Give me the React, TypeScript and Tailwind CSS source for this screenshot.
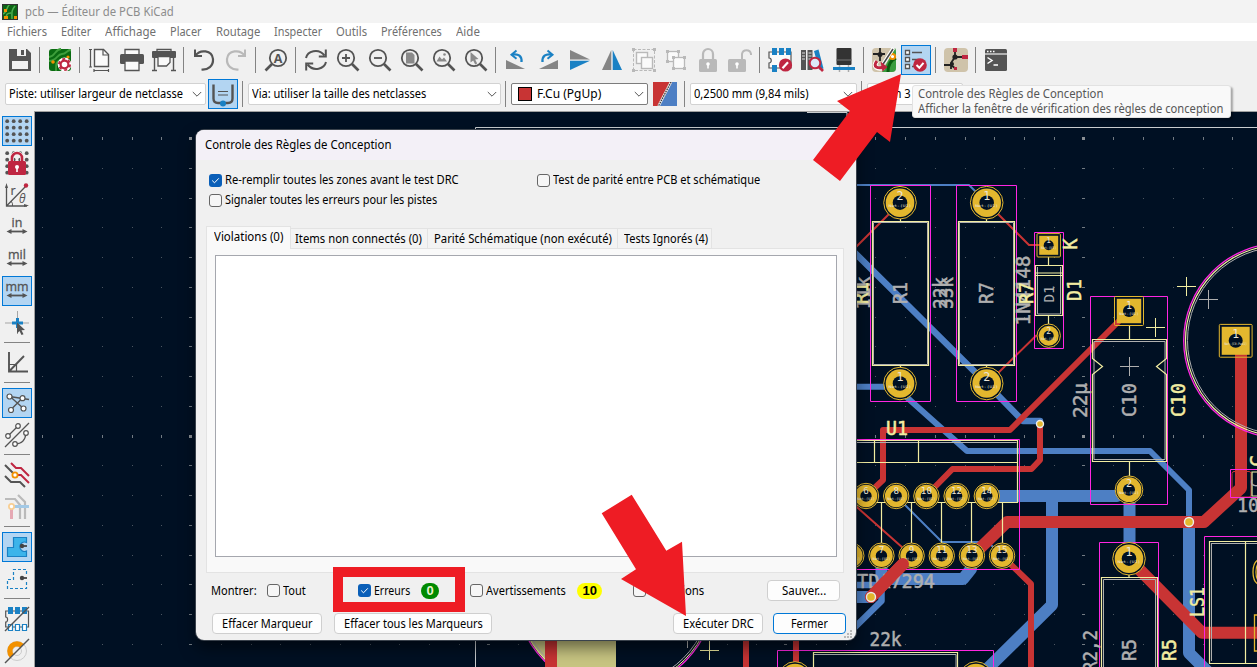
import React, { useLayoutEffect, useRef } from "react";

const D = "#545454";
const B = "#1a81c4";
const R = "#bf2641";
const L = "#b9b9b9";

/* Text run condensed horizontally to a given advance width. */
function T({ w, children, className = "" }: { w: number; children: string; className?: string }) {
  const ref = useRef<HTMLSpanElement>(null);
  useLayoutEffect(() => {
    const el = ref.current;
    if (!el) return;
    el.style.transform = `scaleX(${w / el.offsetWidth})`;
  }, [w, children]);
  return (
    <span className={`block shrink-0 ${className}`} style={{ width: w }}>
      <span ref={ref} className="inline-block origin-left whitespace-pre align-top">
        {children}
      </span>
    </span>
  );
}

function Ico({ children }: { children: React.ReactNode }) {
  return (
    <svg width="24" height="24" viewBox="0 0 24 24" fill="none" className="overflow-visible">
      {children}
    </svg>
  );
}

function Btn({ active, children }: { active?: boolean; children: React.ReactNode }) {
  return (
    <div className="flex h-8 w-8 shrink-0 items-center justify-center">
      <div
        className={
          active
            ? "flex h-[30px] w-[30px] items-center justify-center border border-[#0078d7] bg-[#b3d5f2]"
            : "flex h-[30px] w-[30px] items-center justify-center"
        }
      >
        <Ico>{children}</Ico>
      </div>
    </div>
  );
}

const VSep = () => (
  <div className="flex h-8 w-2 shrink-0 justify-center pt-[3px]">
    <div className="-ml-px h-[26px] w-px bg-[#838383]" />
  </div>
);
const HSep = () => (
  <div className="flex h-2 w-8 shrink-0 flex-col items-center pt-[3px]">
    <div className="h-px w-[26px] bg-[#838383]" />
  </div>
);

const Lens = ({ children }: { children?: React.ReactNode }) => (
  <>
    <circle cx="10" cy="10" r="8.2" stroke={D} strokeWidth="1.8" />
    <path d="M16 16L22.5 22.5" stroke={D} strokeWidth="2.6" />
    {children}
  </>
);
const Slash = () => (
  <>
    <circle cx="17.5" cy="17" r="6.6" fill={R} />
    <path d="M14.5 20.2l5.5-6" stroke="#fff" strokeWidth="2.2" />
  </>
);
const Arrows = ({ t }: { t: string }) => (
  <>
    <text x="12" y="11.5" textAnchor="middle" fill={D} fontSize="12.5" fontFamily="Open Sans, sans-serif" stroke={D} strokeWidth=".3">
      {t}
    </text>
    <path d="M4 16.5h16" stroke={D} strokeWidth="1.8" />
    <path d="M1.5 16.5l5-2.6v5.2zM22.5 16.5l-5-2.6v5.2z" fill={D} />
  </>
);
const Dots = () => (
  <>
    {[2.2, 8.7, 15.2, 21.7].map((y) => [2.2, 8.7, 15.2, 21.7].map((x) => <circle key={`${x}-${y}`} cx={x} cy={y} r="1.9" fill={D} />))}
  </>
);

function TopToolbar() {
  return (
    <div className="flex h-[37px] shrink-0 items-center pl-1 pt-px">
      <Btn>
        <path d="M1 1h18l4 4v18H1z" fill={D} />
        <path d="M6 1h12v7H6zM4 13h16v8H4z" fill="#f0f0f0" />
        <path d="M13 2h3v5h-3z" fill={D} />
        <path d="M6 1h3v7H6z" fill={D} />
      </Btn>
      <VSep />
      <Btn>
        <rect x="1" y="1" width="22" height="22" rx="3" fill="#0a6b12" />
        <path d="M1 9c6 0 6-8 12-8M1 13c8 0 8-7 13-7s4-4 9-4M8 23c0-8 0-9 4-11" stroke="#3f9f3c" strokeWidth="1.8" />
        <circle cx="5" cy="14" r="1.8" fill="#f29100" />
        <circle cx="20" cy="9" r="1.6" fill="#f29100" />
        <circle cx="16.5" cy="16.5" r="5.2" fill="#fff" stroke="#fff" strokeWidth="3.4" />
        <circle cx="16.5" cy="16.5" r="3.9" stroke={R} strokeWidth="2.2" fill="#fff" />
        <circle cx="16.5" cy="16.5" r="5.6" stroke={R} strokeWidth="1.8" strokeDasharray="2.93 2.93" />
      </Btn>
      <VSep />
      <Btn>
        <path d="M6.5 1.5h9l5 5v12h-14z" fill="#fafafa" stroke={D} strokeWidth="1.4" />
        <path d="M15 1v6h6M2.5 1v18M1 1.5h3M1 19h3M6 22.5h14.5M6 21v3M20.5 21v3" stroke={D} strokeWidth="1.2" />
      </Btn>
      <Btn>
        <path d="M5 6.5V1.500h14v5" fill="#fafafa" stroke={D} strokeWidth="1.3" />
        <rect x="0" y="6" width="24" height="10" rx="1.5" fill={D} />
        <path d="M5 13h14v9.500H5z" fill="#fafafa" stroke={D} strokeWidth="1.3" />
      </Btn>
      <Btn>
        <path d="M5 4V1.500h14V4" stroke={D} strokeWidth="1.3" fill="#fafafa" />
        <rect x="0" y="3" width="24" height="7" rx="1" fill={D} />
        <path d="M2.500 10v12M21.500 10v12M0 22.500h5M19 22.500h5" stroke={D} strokeWidth="1.4" />
        <path d="M6 8.500h12v6l-3.500 3.500H6z" fill="#fafafa" stroke={D} strokeWidth="1.3" />
      </Btn>
      <VSep />
      <Btn>
        <path d="M3 1.500v6.500h7" stroke={D} strokeWidth="2" />
        <path d="M3.500 7.500C8 1 20 2 21 11c.5 7-5 11-11.500 10.500" stroke={D} strokeWidth="2.200" />
      </Btn>
      <Btn>
        <path d="M21 1.500v6.500h-7" stroke={L} strokeWidth="2" />
        <path d="M20.500 7.500C16 1 4 2 3 11c-.5 7 5 11 11.500 10.500" stroke={L} strokeWidth="2.200" />
      </Btn>
      <VSep />
      <Btn>
        <circle cx="14" cy="10" r="8.200" stroke={D} strokeWidth="1.800" />
        <path d="M8 16L1.500 22.500" stroke={D} strokeWidth="2.600" />
        <text x="14" y="14.500" textAnchor="middle" fontSize="12.500" fontWeight="700" fill={D} fontFamily="Open Sans, sans-serif">
          A
        </text>
      </Btn>
      <VSep />
      <Btn>
        <path d="M2 10C3.500 3.500 14 -0.500 20.500 7.500M22 14c-1.500 6.500-12 10.500-18.500 2.500" stroke={D} strokeWidth="2" />
        <path d="M21.800 1.500v7h-7M2.200 22.500v-7h7" stroke={D} strokeWidth="2" />
      </Btn>
      <Btn>
        <Lens>
          <path d="M10 6v8M6 10h8" stroke={D} strokeWidth="1.800" />
        </Lens>
      </Btn>
      <Btn>
        <Lens>
          <path d="M6 10h8" stroke={D} strokeWidth="1.800" />
        </Lens>
      </Btn>
      <Btn>
        <Lens>
          <path d="M6 4.500h6l2.500 2.500v8.500H6z" fill="#8a8a8a" />
        </Lens>
      </Btn>
      <Btn>
        <Lens>
          <path d="M4.500 13.500l3-5 2.500 3 2-2 3 4z" fill="#8a8a8a" />
          <circle cx="12.500" cy="6.500" r="1.300" fill="#8a8a8a" />
        </Lens>
      </Btn>
      <Btn>
        <Lens>
          <path d="M6.500 4l8 7-3.300.5 2 4-2 1-2-4-2.700 2z" fill="#8a8a8a" />
        </Lens>
      </Btn>
      <VSep />
      <Btn>
        <path d="M2 12l19 9H2z" fill="#858585" />
        <path d="M17.500 14c.5-6-3-8.500-9-7.500" stroke={B} strokeWidth="2.300" />
        <path d="M12.500 2.500L7.500 6.700l5 4" stroke={B} strokeWidth="2" />
      </Btn>
      <Btn>
        <path d="M22 12l-19 9h19z" fill="#858585" />
        <path d="M6.500 14c-.5-6 3-8.500 9-7.500" stroke={B} strokeWidth="2.300" />
        <path d="M11.500 2.500l5 4.200-5 4" stroke={B} strokeWidth="2" />
      </Btn>
      <Btn>
        <path d="M2 2l20 9.500H2z" fill="#858585" />
        <path d="M2 12.800h20L2 22z" fill={B} />
      </Btn>
      <Btn>
        <path d="M11.300 2v20H2z" fill="#858585" />
        <path d="M12.700 2v20H22z" fill={B} />
      </Btn>
      <Btn>
        <rect x="1.500" y="1.500" width="21" height="21" stroke={L} strokeDasharray="3 1.500" />
        <path d="M0 0h3v3H0zM21 0h3v3h-3zM0 21h3v3H0zM21 21h3v3h-3z" fill={L} />
        <rect x="4.500" y="4.500" width="11" height="11" fill="#fafafa" stroke={L} strokeWidth="1.400" />
        <rect x="9.500" y="9.500" width="11" height="11" fill="#fafafa" stroke={L} strokeWidth="1.400" />
      </Btn>
      <Btn>
        <rect x="3.500" y="3.500" width="11" height="10" fill="#fafafa" stroke={L} strokeWidth="1.300" />
        <rect x="9.500" y="9.500" width="11" height="11" fill="#fafafa" stroke={L} strokeWidth="1.300" />
        <path d="M2 2h3v3H2zM13 2h3v3h-3zM2 12h3v3H2zM8 8h3v3H8zM19 8h3v3h-3zM8 19h3v3H8zM19 19h3v3h-3z" fill={L} />
      </Btn>
      <Btn>
        <path d="M7 11V6a5 5 0 0 1 10 0v5" stroke={L} strokeWidth="2.200" />
        <rect x="3" y="11" width="18" height="13" rx="1.500" fill={L} />
        <circle cx="12" cy="16" r="1.800" fill="#fff" />
        <path d="M11.200 16h1.600v4.500h-1.600z" fill="#fff" />
      </Btn>
      <Btn>
        <path d="M14 11V6a4.600 4.600 0 0 1 9 0v1" stroke={L} strokeWidth="2" />
        <rect x="0" y="11" width="18" height="13" rx="1.500" fill={L} />
        <circle cx="9" cy="16" r="1.800" fill="#fff" />
        <path d="M8.200 16h1.600v4.500H8.200z" fill="#fff" />
      </Btn>
      <VSep />
      <Btn>
        <path d="M1 4h22v16H1v-5c3 0 3-5 0-5z" fill="#fafafa" stroke={D} strokeWidth="1.200" />
        <path d="M4 0h5v7H4zM11 0h5v7h-5zM18 0h5v7h-5zM4 17h5v7H4z" fill={B} />
        <Slash />
      </Btn>
      <Btn>
        <path d="M1 2h5v20H1zM7.500 2h5v20h-5z" fill={D} />
        <path d="M14 3l4.500-1.500 5 19-4.500 1z" fill={B} />
        <path d="M2 5h3M2 8h3M8.500 5h3M8.500 8h3M2 11h3M8.500 11h3" stroke="#ddd" strokeWidth="1" />
        <circle cx="15" cy="15" r="5.300" fill="#dceaf8" stroke={R} strokeWidth="2" />
        <path d="M19 19l4 4" stroke={R} strokeWidth="2.600" />
      </Btn>
      <Btn>
        <rect x="4.500" y="0" width="15" height="17" rx="1" fill="#333" />
        <path d="M4 12h16" stroke="#777" />
        <path d="M7.500 17v7M16.500 17v7" stroke="#aaa" strokeWidth="1.500" />
        <path d="M1 19h22v3H1z" fill={B} />
      </Btn>
      <VSep />
      <Btn>
        <rect width="24" height="24" rx="4" fill="#cfc3aa" />
        <path d="M10 24L23 0q1 1 1 4v16q0 4-4 4z" fill="#3a9c3f" />
        <path d="M16 24c0-8 3-12 8-14" stroke="#0b5d10" strokeWidth="3" />
        <circle cx="20.500" cy="8.500" r="2.600" fill="#fff" stroke="#f29100" strokeWidth="2" />
        <path d="M1 6h12M8 0v13" stroke="#222" strokeWidth="1.800" />
        <circle cx="8" cy="6.500" r="2.500" fill="#222" />
        <path d="M21.500 0L10.500 17" stroke="#fff" strokeWidth="3.600" />
        <path d="M21 1L10.500 17" stroke="#444" strokeWidth="1.500" />
        <path d="M5 13c-5 6 1 8.500 7 6.500" stroke="#fff" strokeWidth="5" />
        <path d="M5 13c-5 6 1 8 7 6" stroke={R} strokeWidth="3" />
        <path d="M8.500 13.500l7 5.500-5 4.500z" fill={R} />
      </Btn>
      <Btn active>
        <path d="M1.500 2.500h4v4h-4zM1.500 9.500h4v4h-4zM1.500 16.500h4v4h-4z" fill="#fff" stroke={D} strokeWidth="1.300" />
        <path d="M8 4.500h10M8 11.500h7M8 18.500h4" stroke={D} strokeWidth="1.400" />
        <circle cx="16" cy="17" r="6.800" fill={R} />
        <path d="M12.500 17l2.800 2.800 4.200-5" stroke="#fff" strokeWidth="2" />
      </Btn>
      <VSep />
      <Btn>
        <rect width="24" height="24" rx="4" fill="#cfc3aa" />
        <path d="M11 3v6l7 0M11 9l-4 6v6M0 17h8M7 17l5 4" stroke="#222" strokeWidth="1.800" />
        <circle cx="11" cy="9" r="2.600" fill="#222" />
        <circle cx="8" cy="16" r="2" fill="#222" />
        <path d="M9 0h4v4H9zM18 7h6v4h-6zM10 19h3v3h-3z" fill={R} />
      </Btn>
      <VSep />
      <Btn>
        <rect x="1" y="1" width="22" height="22" rx="1.500" fill={D} />
        <path d="M1 6h22" stroke="#f0f0f0" strokeWidth="1.200" />
        <path d="M3 3.500h1.500M6 3.500h1.500M9 3.500h1.500" stroke="#fff" strokeWidth="1.400" />
        <path d="M3.500 9.500L8 12.500l-4.500 3M9.500 17H14" stroke="#fff" strokeWidth="1.500" />
      </Btn>
    </div>
  );
}

function Combo({ className, dark, children }: { className: string; dark?: boolean; children: React.ReactNode }) {
  return (
    <div
      className={`flex h-[22px] shrink-0 items-center rounded-[2px] border bg-white pb-px pl-[3px] pr-[3px] ${
        dark ? "border-[#7c7c7c]" : "border-[#d2d2d2]"
      } ${className}`}
    >
      <div className="flex min-w-0 flex-1 items-center">{children}</div>
      <svg width="10" height="8" viewBox="0 0 10 8" fill="none" className="shrink-0">
        <path d="M.8 2L5 6.200 9.200 2" stroke="#555" />
      </svg>
    </div>
  );
}

const Sep2 = ({ className }: { className: string }) => <div className={`h-[26px] w-px shrink-0 bg-[#838383] ${className}`} />;

function PropertiesBar() {
  return (
    <div className="flex h-[33px] shrink-0 items-center pb-px pl-[5px] text-[12px] leading-4 text-black">
      <Combo className="w-[201px]">
        <T w={174}>Piste: utiliser largeur de netclasse</T>
      </Combo>
      <div className="ml-[2px] flex h-[30px] w-[30px] shrink-0 items-center justify-center border border-[#0078d7] bg-[#b3d5f2]">
        <Ico>
          <path d="M2.500 2.500v14q0 4.500 4.500 4.500h10q4.500 0 4.500-4.500v-14" stroke={D} strokeWidth="2.400" />
          <path d="M7 9.500h10M7 13h10" stroke={D} strokeWidth="1.200" />
          <circle cx="12" cy="21.500" r="3" fill={B} />
        </Ico>
      </div>
      <Sep2 className="ml-1 mr-[5px]" />
      <Combo className="w-[253px]">
        <T w={174}>Via: utiliser la taille des netclasses</T>
      </Combo>
      <Sep2 className="ml-1 mr-[5px]" />
      <Combo className="w-[137px]" dark>
        <div className="ml-[3px] mr-[5px] h-[14px] w-[14px] border border-black bg-[#c83434]" />
        <T w={64}>F.Cu (PgUp)</T>
      </Combo>
      <svg width="24" height="24" viewBox="0 0 24 24" className="ml-[5px] shrink-0">
        <path d="M0 0h24v24H0z" fill="#4d7fc4" />
        <path d="M0 0h19L6 24H0z" fill="#c83434" />
        <path d="M18 0L5.500 24" stroke="#e8e8e8" strokeWidth="2.600" />
        <path d="M18 0L5.500 24" stroke="#333" strokeWidth="1.200" strokeDasharray="1.500 1" />
      </svg>
      <Sep2 className="ml-[7px] mr-[5px]" />
      <Combo className="w-[167px]">
        <T w={115}>0,2500 mm (9,84 mils)</T>
      </Combo>
      <Sep2 className="ml-1 mr-[5px]" />
      <Combo className="w-[96px]">
        <T w={40}>Zoom 3</T>
      </Combo>
    </div>
  );
}

function LeftToolbar() {
  return (
    <div className="flex w-[34px] shrink-0 flex-col pl-px pt-1">
      <Btn active>
        <Dots />
      </Btn>
      <Btn>
        <Dots />
        <path d="M7 12V7a5 5 0 0 1 10 0v5" stroke="#f0f0f0" strokeWidth="4" />
        <path d="M7 12V7a5 5 0 0 1 10 0v5" stroke={R} strokeWidth="2.600" />
        <rect x="3" y="10" width="18" height="14" rx="1.500" fill={R} />
        <circle cx="12" cy="16" r="2" fill="#fff" />
        <path d="M11.200 16h1.600v5h-1.600z" fill="#fff" />
      </Btn>
      <Btn>
        <path d="M1.500 3v20H22M1.500 23L21 3" stroke={D} strokeWidth="1.300" />
        <path d="M1.500 0L0 5h3zM24 22.500l-5-1.500v3z" fill={D} />
        <path d="M6 18q2 2 1.500 5" stroke={D} />
        <circle cx="21" cy="2.500" r="2.200" fill={R} />
        <text x="5.500" y="11.500" fontSize="12.500" fill={D} stroke={D} strokeWidth=".2" fontFamily="Open Sans, sans-serif">r</text>
        <text x="14" y="20" fontSize="12" fontStyle="italic" fill={D} fontFamily="Open Sans, sans-serif">θ</text>
      </Btn>
      <Btn><Arrows t="in" /></Btn>
      <Btn><Arrows t="mil" /></Btn>
      <Btn active><Arrows t="mm" /></Btn>
      <Btn>
        <path d="M12.500 0v23M0 12h24" stroke="#a5a5a5" />
        <path d="M12.500 7v10M7 12h11" stroke={B} strokeWidth="3" />
        <path d="M12 11.500l8 7.500-3.500.300 2 4-2 .700-2-4-2.500 2.500z" fill={D} />
      </Btn>
      <HSep />
      <Btn>
        <path d="M4 1v19.500h19M4 20.500L19 5" stroke={D} strokeWidth="1.900" />
        <path d="M4 13.500h7.500v7" stroke={D} strokeWidth="1.200" />
      </Btn>
      <HSep />
      <Btn active>
        <path d="M4.500 5l14 12.500M4.500 5.500L24 8.500M5.500 19L17.500 7" stroke={D} strokeWidth="1.400" />
        <g fill="#fff" stroke={D} strokeWidth="1.200">
          <circle cx="4.500" cy="5.500" r="2.500" />
          <circle cx="17.500" cy="7.200" r="2.500" />
          <circle cx="6" cy="19" r="2.500" />
          <circle cx="18.500" cy="17.500" r="2.500" />
        </g>
      </Btn>
      <Btn>
        <path d="M0 24L24 0M3 13L13 3M10 21q10 0 11-11" stroke={D} strokeWidth="1.300" />
        <g fill="#fff" stroke={D} strokeWidth="1.200">
          <circle cx="3" cy="13" r="2.300" />
          <circle cx="13" cy="3" r="2.300" />
          <circle cx="10" cy="21" r="2.300" />
          <circle cx="21" cy="10" r="2.300" />
        </g>
      </Btn>
      <HSep />
      <Btn>
        <path d="M0 2l9 9M0 13l6 6h9l5 5" stroke={D} strokeWidth="2" />
        <path d="M6 0l5 5h5l8 8M10 12h6l8 8" stroke={R} strokeWidth="2" />
        <circle cx="10" cy="12" r="2.600" fill="#fff" stroke="#f29100" strokeWidth="1.800" />
      </Btn>
      <Btn>
        <path d="M0 4h10l5 6v14M13 0l7 7v17" stroke="#bababa" strokeWidth="2.200" />
        <path d="M7 11.500h17" stroke="#a3c9e6" strokeWidth="3" />
        <path d="M6.500 13v11" stroke="#e5a8b3" strokeWidth="3" />
        <circle cx="6.500" cy="11.500" r="2.600" fill="#fff" stroke="#f8cf94" strokeWidth="1.800" />
      </Btn>
      <HSep />
      <Btn active>
        <path d="M2.500 12.500h6v-10h13v5a4.700 4.700 0 1 0 0 8.500v5.500h-19z" fill="#3cb4ea" stroke={B} strokeWidth="1.200" />
        <path d="M16 11h6" stroke="#444" strokeWidth="1.800" />
        <circle cx="17" cy="11" r="2.200" fill="#444" />
      </Btn>
      <Btn>
        <path d="M2.500 22V12.500h6v-10h13v5M21.500 15v6.500h-19" stroke={B} strokeWidth="1.200" strokeDasharray="3 2" />
        <path d="M16 11h6" stroke="#444" strokeWidth="1.800" />
        <circle cx="17" cy="11" r="2.200" fill="#444" />
      </Btn>
      <HSep />
      <Btn>
        <path d="M.7 4h22.800v16H.7v-5c2.500 0 2.500-5 0-5z" stroke={D} strokeWidth="1.200" />
        <path d="M3 0h5v7H3zM10 0h5v7h-5zM17 0h5v7h-5z" fill={B} />
        <path d="M3.500 17.500h4v6h-4zM10.500 17.500h4v6h-4zM17.500 17.500h4v6h-4z" fill="#fff" stroke={B} strokeWidth="1.200" />
        <path d="M0 24L24 0" stroke={D} strokeWidth="1.400" />
      </Btn>
      <Btn>
        <circle cx="12" cy="12" r="9.500" stroke="#ccc" strokeWidth="1" />
        <circle cx="12" cy="12" r="4.500" stroke="#ccc" strokeWidth="1" />
        <path d="M5.100 18.900A9.700 9.700 0 0 1 18.900 5.100L15.200 8.800a4.500 4.500 0 0 0-6.400 6.400z" fill="#f29100" />
        <path d="M0 24L24 0" stroke={D} strokeWidth="1.400" />
      </Btn>
    </div>
  );
}

/* ---------- board drawing ---------- */
const SILK = "#f2eda1";
const FAB = "#afafaf";
const GOLD = "#e3b72e";
const MAG = "#ff26e2";
const BLUE = "#4d7fc4";
const RED = "#c83434";
const BG = "#001023";

function Grid() {
  const out: React.ReactNode[] = [];
  for (let i = -5; i < 37; i++)
    for (let j = 0; j < 19; j++) {
      const x = Math.round(190 + i * 29.75);
      const y = Math.round(138 + j * 29.75);
      const mx = i % 10 === 0;
      const my = j % 10 === 0;
      out.push(
        <rect
          key={`${i}_${j}`}
          x={mx ? x - 1 : x + 1}
          y={my ? y - 1 : y}
          width={mx ? 3 : 1}
          height={my ? 3 : 1}
          fill={mx && my ? "#8a8f94" : mx || my ? "#737b83" : "#4c5661"}
        />,
      );
    }
  return <>{out}</>;
}

function Label({ x, y, len, size = 19, c = FAB, v, children }: { x: number; y: number; len: number; size?: number; c?: string; v?: boolean; children: string }) {
  return (
    <text
      transform={v ? `translate(${x + size * 0.365} ${y}) rotate(-90)` : `translate(${x} ${y + size * 0.365})`}
      textAnchor="middle"
      textLength={len}
      lengthAdjust="spacingAndGlyphs"
      fontSize={size}
      fill={c}
      stroke={c}
      strokeWidth={size > 15 ? 0.5 : 0}
      fontFamily="DejaVu Sans Mono, monospace"
    >
      {children}
    </text>
  );
}

function Pad({ x, y, r, ring, hole, n, sq, net = "Net-(U1)" }: { x: number; y: number; r: number; ring: number; hole: number; n: string; sq?: boolean; net?: string }) {
  return (
    <g>
      {sq ? (
        <>
          <rect x={x - r} y={y - r} width={2 * r} height={2 * r} fill={GOLD} />
          <rect x={x - ring} y={y - ring} width={2 * ring} height={2 * ring} rx="1" fill="none" stroke={GOLD} />
        </>
      ) : (
        <>
          <circle cx={x} cy={y} r={ring} fill={BG} stroke={GOLD} />
          <circle cx={x} cy={y} r={r} fill={GOLD} />
        </>
      )}
      <circle cx={x} cy={y} r={hole} fill={BG} />
      <text x={x} y={y - r * 0.2} textAnchor="middle" fontSize={r * 0.82} fill="#e9e4d6" fontFamily="DejaVu Sans Mono, monospace">
        {n}
      </text>
      <text x={x} y={y + 4} textAnchor="middle" fontSize="3.5" fill="#e9e4d6" fontFamily="DejaVu Sans Mono, monospace" textLength={r * 1.6} lengthAdjust="spacingAndGlyphs">
        {net}
      </text>
    </g>
  );
}

const Plus = ({ x, y, c }: { x: number; y: number; c: string }) => <path d={`M${x - 9.5} ${y}h19M${x} ${y - 9.5}v19`} stroke={c} />;

function Via({ x, y, r = 5.2 }: { x: number; y: number; r?: number }) {
  return <circle cx={x} cy={y} r={r - 0.7} fill={GOLD} stroke="#ececec" strokeWidth="1.4" />;
}

function Board() {
  return (
    <svg width="1222" height="555" viewBox="35 112 1222 555" fill="none" className="block bg-[#001023]">
      <Grid />
      <path d="M475.5 667V127.500H1257M807 112.500h40v5" stroke="#c9cdd0" />
      {/* electrolytic capacitor below the dialog */}
      <circle cx="615" cy="590" r="100" fill={BG} />
      <path d="M616 490a100 100 0 0 0 0 200z" fill="#c8c582" />
      <circle cx="615" cy="590" r="100" stroke={MAG} strokeWidth="1.3" />
      <circle cx="615" cy="590" r="98.5" stroke={SILK} />
      <circle cx="615" cy="590" r="96.5" stroke={FAB} />
      <path d="M551 600v67" stroke={RED} strokeWidth="12" />
      <path d="M746 630v37M796 630v37" stroke={RED} strokeWidth="6" />
      <Plus x={709.5} y={650.5} c={SILK} />
      <Plus x={687.5} y={638.5} c={FAB} />
      {/* back copper */}
      <g stroke={BLUE} strokeLinecap="round" strokeLinejoin="round">
        <path d="M850 185H969l18 18" strokeWidth="2" />
        <path d="M850 248L986 383l37 38h17" strokeWidth="6.5" />
        <path d="M850 386.800h45l72 64.200H1150l39 39v32" strokeWidth="6" />
        <path d="M987 496H1117l12-6M1052 496V605L985 671M1129.500 490v68M1189 522V653l20 20" strokeWidth="12" />
        <path d="M896 496l46 46h46l14 14" strokeWidth="2" />
        <path d="M881.500 556v23H963l8-10v-14M850 597h21" strokeWidth="12" />
        <path d="M850 585h30M881.500 580v21L850 632" strokeWidth="6.5" />
      </g>
      {/* front copper */}
      <g stroke={RED} strokeLinecap="round" strokeLinejoin="round">
        <path d="M850 253l50-50M987 203l42 42h20M1049 335.700h-13L987 384M850 501l62 55" strokeWidth="2" />
        <path d="M1129 311L1010 430H883v50l-16 15M1040 424v36l-8.500 9H952.500L927 495" strokeWidth="6" />
        <path d="M1241 345V488l-37 34H1007L972 556M1129 559l73 73.700h60M871 597l40-41" strokeWidth="12" />
        <path d="M1002 556l29 28v90" strokeWidth="6" />
        <rect x="1232" y="471.5" width="19" height="25.5" rx="2" strokeWidth="1" />
      </g>
      {/* courtyards */}
      <g stroke={MAG} strokeWidth="1">
        <path d="M870.500 185.500h60v216h-60zM956.500 185.500h60v216h-60zM1034.500 232.500h29v116h-29zM1090.500 296.500h77v208h-77z" />
        <path d="M840 439.500h179.500v130H840M1099.500 670V542.500h59V670M1260 536.500h-55.500V670M1260 469.500h-29.500v28H1260M777.500 670V650.500h216V670" />
        <circle cx="1281" cy="340.5" r="97.3" strokeWidth="1.3" />
      </g>
      {/* fabrication and silkscreen outlines */}
      <g stroke={FAB} strokeWidth="1">
        <path d="M873.500 222.500h54v142h-54zM959.500 222.500h54v142h-54zM1037.500 267v47h23v-47M1094 341.500h71v118h-71z" />
        <path d="M840 442.500h176.500M1103.500 670V579.500h52V670M1211.500 543.500H1260M1211.500 543v118M813 654.500h143v15" />
        <circle cx="1281" cy="340.5" r="93.5" />
      </g>
      <g stroke={SILK} strokeWidth="1.2">
        <path d="M872.500 221.500h56v144h-56zM958.500 221.500h56v144h-56zM900.500 212v9M900.500 366v8M986.500 212v9M986.500 366v8" />
        <path d="M1035.500 265.500h27v50h-27zM1035 273h28M1035 275.500h28M1048.500 257v8M1048.500 316v9" />
        <path d="M1092.500 339.500h74v19l-10 8 10 8v87h-74v-87l10-8-10-8zM1129.500 326v13M1129.500 461v16" />
        <path d="M840 440.500h177.500v62H840M840 462.500h177M874.500 441v21M918.500 441v21M881.500 503v40M911.500 503v40M941.500 503v40M971.500 503v40M1002.500 503v40" />
        <path d="M1101.500 670v-92.500h56V670M1129 575v3M1260 541.500h-50.500v122h50.500M1245.500 542v121M1260 472h-8v24h8M813.500 670v-17.500h144V670" />
        <circle cx="1281" cy="340.5" r="95.5" />
      </g>
      <Plus x={1129.5} y={366.5} c={FAB} />
      <Plus x={1155.5} y={327.5} c={SILK} />
      <Plus x={1186.5} y={286.5} c={SILK} />
      <Plus x={1208.5} y={299.5} c={FAB} />
      {/* pads */}
      <Pad x={900} y={202.7} r={14.3} ring={16.3} hole={7.3} n="2" />
      <Pad x={900} y={383.5} r={14.3} ring={16.3} hole={7.3} n="1" />
      <Pad x={986.7} y={202.7} r={14.3} ring={16.3} hole={7.3} n="1" />
      <Pad x={986.7} y={383.5} r={14.3} ring={16.3} hole={7.3} n="2" />
      <Pad x={1048.7} y={245.3} r={9.5} ring={11.7} hole={5} n="1" sq />
      <Pad x={1048.7} y={335.7} r={10} ring={11.7} hole={5} n="2" />
      <Pad x={1129} y={311} r={12.2} ring={14.5} hole={6} n="1" sq />
      <Pad x={1129} y={489.7} r={12.4} ring={13.8} hole={6} n="2" />
      <Pad x={1235.7} y={340.8} r={14} ring={16.4} hole={7} n="1" sq net="Net-(C9-Pad1)" />
      <Pad x={1129} y={558.7} r={14.3} ring={16.3} hole={7.3} n="1" />
      {["6", "8", "10", "12", "14"].map((n, i) => (
        <Pad key={n} x={866 + i * 30.2} y={496} r={11.3} ring={12.7} hole={5.7} n={n} />
      ))}
      {["5", "7", "9", "11", "13", "15"].map((n, i) => (
        <Pad key={n} x={851.3 + i * 30.15} y={555.7} r={11.3} ring={12.7} hole={5.7} n={n} />
      ))}
      <Pad x={976} y={678} r={14.3} ring={16.3} hole={7.3} n="" net="" />
      <Pad x={795} y={678} r={14.3} ring={16.3} hole={7.3} n="" net="" />
      <path d="M1260 559q-7 2-7 13t7 13M1260 562q-4 2-4 10t4 10M1260 615h-5.500v36h5.500" stroke={GOLD} strokeWidth="1.3" />
      <Via x={1040} y={424} r={4.2} />
      <Via x={1189} y={522} />
      {/* texts */}
      <Label v x={863} y={293} len={33}>11k</Label>
      <Label v x={861} y={293} len={22} c={SILK}>R1</Label>
      <Label v x={900.5} y={293} len={22}>R1</Label>
      <Label v x={940} y={293} len={32}>22k</Label>
      <Label v x={946} y={293} len={32}>33k</Label>
      <Label v x={986.5} y={293} len={22}>R7</Label>
      <Label v x={1023.5} y={290.5} len={70}>1N4148</Label>
      <Label v x={1026} y={293} len={22} c={SILK}>R7</Label>
      <Label v x={1048.5} y={294} len={17} size={14}>D1</Label>
      <Label v x={1070} y={244} len={11} c={SILK}>K</Label>
      <Label v x={1074.5} y={290} len={22} c={SILK}>D1</Label>
      <Label v x={1080.5} y={400.5} len={35}>22µ</Label>
      <Label v x={1129} y={400} len={34}>C10</Label>
      <Label v x={1178} y={400} len={34} c={SILK}>C10</Label>
      <Label x={897} y={428} len={22} c={SILK}>U1</Label>
      <Label x={896} y={581} len={78}>TDA7294</Label>
      <Label x={885.5} y={639.5} len={32}>22k</Label>
      <Label v x={1090} y={651} len={42}>R2,2</Label>
      <Label v x={1129} y={650} len={22}>R5</Label>
      <Label v x={1169} y={650} len={22} c={SILK}>R5</Label>
      <Label v x={1197.5} y={602} len={30} c={SILK}>LS1</Label>
      <Label x={1248} y={505.5} len={22}>10</Label>
      <Label v x={1257} y={461} len={12} c={SILK}>C</Label>
      <Label v x={1256} y={483} len={9} size={14}>C</Label>
      <path d="M871 597l32-33" stroke={RED} strokeWidth="12" strokeLinecap="round" />
      <Via x={871} y={597} />
    </svg>
  );
}

/* ---------- dialog ---------- */
function Check({ on, w, children, className = "" }: { on?: boolean; w: number; children: string; className?: string }) {
  return (
    <div className={`flex h-5 shrink-0 items-center gap-[3px] ${className}`}>
      {on ? (
        <div className="flex h-[13px] w-[13px] items-center justify-center rounded-[3px] bg-[#0a5fb8]">
          <svg width="9" height="9" viewBox="0 0 9 9" fill="none">
            <path d="M1.200 4.500L3.500 6.800 7.800 2.300" stroke="#fff" />
          </svg>
        </div>
      ) : (
        <div className="h-[13px] w-[13px] rounded-[3px] border border-[#666] bg-[#f6f6f6]" />
      )}
      <T w={w}>{children}</T>
    </div>
  );
}

function Button({ className, w, primary, children }: { className: string; w: number; primary?: boolean; children: string }) {
  return (
    <div
      className={`flex h-[21px] shrink-0 items-center justify-center rounded-[4px] border bg-[#fdfdfd] ${
        primary ? "border-[#0078d7]" : "border-[#cfcfcf]"
      } ${className}`}
    >
      <T w={w}>{children}</T>
    </div>
  );
}

function Dialog() {
  return (
    <div className="absolute left-[196px] top-[130px] flex h-[510px] w-[660px] flex-col overflow-hidden rounded-[8px] bg-[#f0f0f0] text-[12px] leading-4 text-black shadow-[0_0_0_1px_#3a424c,0_8px_16px_rgba(0,0,0,0.5)]">
      <div className="flex h-[30px] shrink-0 items-center bg-[#f3f0f7] pl-[9px]">
        <T w={186}>Controle des Règles de Conception</T>
      </div>
      <div className="mt-[10px] flex pl-[13px]">
        <Check on w={234} className="w-[328px]">Re-remplir toutes les zones avant le test DRC</Check>
        <Check w={207}>Test de parité entre PCB et schématique</Check>
      </div>
      <div className="flex pl-[13px]">
        <Check w={212}>Signaler toutes les erreurs pour les pistes</Check>
      </div>
      <div className="mt-[16px] flex h-[22px] items-end pl-[10px]">
        <div className="z-10 -mb-px flex h-[23px] w-[85px] justify-center border border-b-0 border-[#e3e3e3] bg-[#f9f9f9] pt-[2px]">
          <T w={69}>Violations (0)</T>
        </div>
        <div className="flex h-5 w-[137px] items-center border-r border-t border-[#e3e3e3] bg-[#f3f3f3] pl-1">
          <T w={127}>Items non connectés (0)</T>
        </div>
        <div className="flex h-5 w-[190px] items-center border-r border-t border-[#e3e3e3] bg-[#f3f3f3] pl-[6px]">
          <T w={178}>Parité Schématique (non exécuté)</T>
        </div>
        <div className="flex h-5 w-[94px] items-center border-r border-t border-[#e3e3e3] bg-[#f3f3f3] pl-[6px]">
          <T w={84}>Tests Ignorés (4)</T>
        </div>
      </div>
      <div className="ml-[10px] h-[325px] w-[638px] shrink-0 border border-[#e3e3e3] bg-[#f9f9f9] pl-2 pt-[6px]">
        <div className="h-[302px] w-[622px] border border-[#a5a7ae] bg-white" />
      </div>
      <div className="mt-[7px] flex h-[21px] items-center pl-[15px]">
        <T w={46} className="mr-[10px]">Montrer:</T>
        <Check w={23} className="w-[91px]">Tout</Check>
        <Check on w={36} className="w-[63px]">Erreurs</Check>
        <div className="flex h-4 w-[18px] items-center justify-center rounded-[8px] bg-[#008a00] font-['Liberation_Sans',sans-serif] text-[13px] font-bold text-[#eaf5d0]">0</div>
        <Check w={80} className="ml-[31px]">Avertissements</Check>
        <div className="ml-[11px] flex h-4 w-[25px] items-center justify-center rounded-[8px] bg-[#ffff00] font-['Liberation_Sans',sans-serif] text-[13px] font-bold">
          <T w={14}>10</T>
        </div>
        <Check w={55} className="ml-[31px]">Exclusions</Check>
        <Button className="ml-[63px] w-[73px]" w={44}>Sauver...</Button>
      </div>
      <div className="mt-[12px] flex items-center pl-4">
        <Button className="w-[110px]" w={91}>Effacer Marqueur</Button>
        <Button className="ml-3 w-[158px]" w={139}>Effacer tous les Marqueurs</Button>
        <Button className="ml-[181px] w-[90px]" w={71}>Exécuter DRC</Button>
        <Button className="ml-[10px] w-[73px]" w={37} primary>Fermer</Button>
      </div>
      <svg width="9" height="9" viewBox="0 0 9 9" className="absolute bottom-[1px] right-[3px]">
        <path d="M6 0h2v2H6zM3 3h2v2H3zM6 3h2v2H6zM0 6h2v2H0zM3 6h2v2H3zM6 6h2v2H6z" fill="#b8b8b8" />
      </svg>
    </div>
  );
}

const MENUS: [string, number][] = [
  ["Fichiers", 40],
  ["Editer", 30],
  ["Affichage", 51],
  ["Placer", 32],
  ["Routage", 44],
  ["Inspecter", 48],
  ["Outils", 31],
  ["Préférences", 61],
  ["Aide", 24],
];

export default function App() {
  return (
    <div className="relative flex h-[667px] w-[1257px] flex-col overflow-hidden bg-[#f0f0f0] font-['Noto_Sans','Open_Sans',sans-serif]">
      <div className="flex h-[23px] shrink-0 items-center gap-[7px] bg-[#f3f3f3] pl-[2px] text-[12px] leading-4 text-[#8d8d8d]">
        <svg width="16" height="16" viewBox="0 0 16 16" fill="none">
          <rect width="16" height="16" rx="1" fill="#0d6415" />
          <path d="M0 10c5 0 4-7 8-10M4 16c0-6 1-7 5-7M10 16c0-8-1-9 3-14" stroke="#4caf50" strokeWidth="1.5" />
          <path d="M2 5h3v3H2zM2 12h4v3H2zM12 12h3v3h-3z" fill="#f29100" />
          <rect x=".5" y=".5" width="15" height="15" stroke="#333" />
        </svg>
        <T w={149}>pcb — Éditeur de PCB KiCad</T>
      </div>
      <div className="flex h-[18px] shrink-0 items-center gap-[14px] bg-white pl-[7px] text-[12px] leading-4 text-[#707070]">
        {MENUS.map(([m, w]) => (
          <T key={m} w={w}>{m}</T>
        ))}
      </div>
      <TopToolbar />
      <PropertiesBar />
      <div className="flex min-h-0 flex-1">
        <LeftToolbar />
        <div className="h-[556px] flex-1 overflow-hidden border-l border-t border-[#a0a0a0]">
          <Board />
        </div>
      </div>

      <Dialog />

      <div className="absolute left-[333px] top-[567px] h-[45px] w-[132px] border-[10px] border-[#ee1c24]" />
      <div className="absolute left-[912px] top-[85px] flex h-[33px] w-[319px] flex-col justify-center rounded-[3px] border border-[#e2e2e2] bg-[#f9f9f9] pb-px pl-[5px] text-[12px] leading-[15px] text-[#575757] shadow-[2px_2px_2px_rgba(0,0,0,0.3)]">
        <T w={185}>Controle des Règles de Conception</T>
        <T w={305}>Afficher la fenêtre de vérification des règles de conception</T>
      </div>
      <svg width="1257" height="667" viewBox="0 0 1257 667" className="pointer-events-none absolute left-0 top-0">
        <g fill="#ee1c24">
          <path d="M901 74L837 101l13 10-37 49 27 21 37-49 13 10z" />
          <path d="M631.700 494.700L601.700 513.300 636 569.300 621 579l65 37-4-74.300-15.700 9z" />
        </g>
      </svg>
    </div>
  );
}
